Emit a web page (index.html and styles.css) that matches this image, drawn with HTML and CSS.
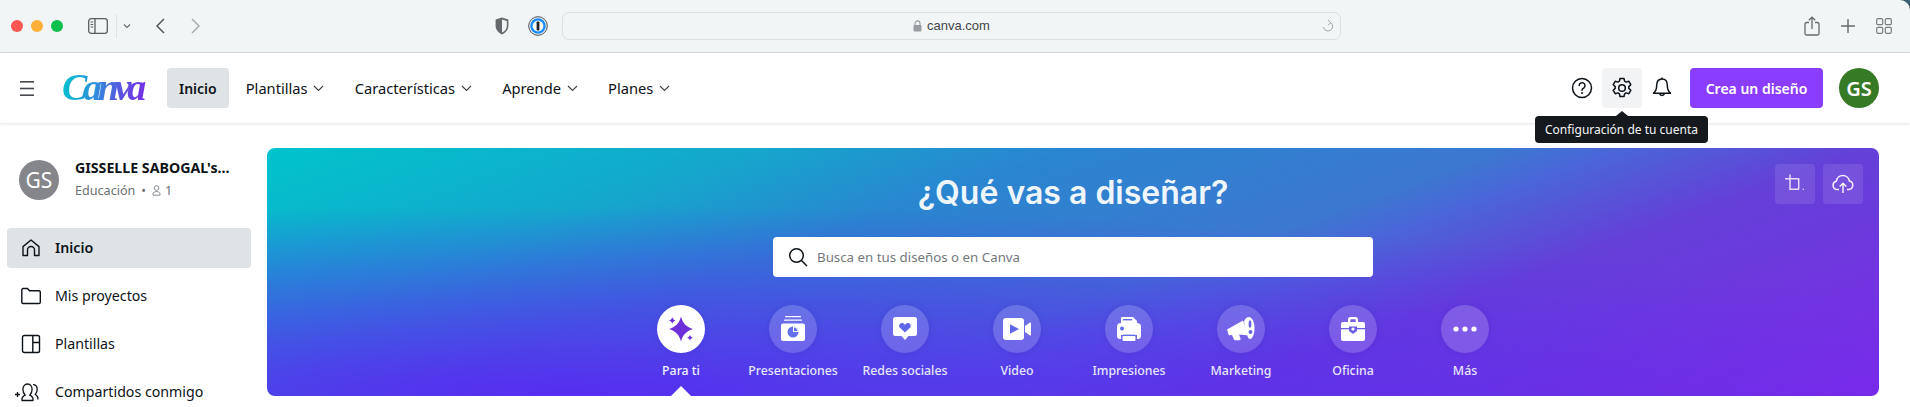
FILE: index.html
```html
<!DOCTYPE html>
<html lang="es">
<head>
<meta charset="utf-8">
<title>Canva</title>
<link rel="stylesheet" href="styles.css">
</head>
<body>
<div class="window">
  <header class="toolbar">
    <div class="lights"><span class="light red"></span><span class="light amber"></span><span class="light green"></span></div>
    <svg class="tb-sidebar" width="20" height="16" viewBox="0 0 20 16" fill="none" stroke="#5a5d60" stroke-width="1.3"><rect x=".7" y=".7" width="18.6" height="14.6" rx="2.5"/><path d="M7 1v14"/><path d="M2.600 4h2.600M2.600 6.500h2.600M2.600 9h2.600" stroke-width="1"/></svg>
    <span class="tb-sep"></span>
    <svg class="tb-drop" width="8" height="6" viewBox="0 0 8 6" fill="none" stroke="#6b6e71" stroke-width="1.2"><path d="M1 1.500l3 3 3-3"/></svg>
    <svg class="tb-back" width="10" height="16" viewBox="0 0 10 16" fill="none" stroke="#55585b" stroke-width="1.500"><path d="M9 1L2 8l7 7"/></svg>
    <svg class="tb-next" width="10" height="16" viewBox="0 0 10 16" fill="none" stroke="#a9acae" stroke-width="1.500"><path d="M1 1l7 7-7 7"/></svg>
    <svg class="tb-shield" width="14" height="18" viewBox="0 0 14 18"><path d="M7 .6l6.400 2v6.200c0 4-2.800 7-6.400 8.600C3.400 15.800.6 12.800.6 8.800V2.600z" fill="#66696c"/><path d="M7 2.400l4.800 1.500v5c0 3-2.100 5.300-4.800 6.700z" fill="#f1f4f5"/></svg>
    <svg class="tb-onepass" width="20" height="20" viewBox="0 0 20 20"><circle cx="10" cy="10" r="9.300" fill="#f1f4f5" stroke="#4b4e52" stroke-width="1"/><circle cx="10" cy="10" r="6.600" fill="#fff" stroke="#1a8cff" stroke-width="2.400"/><rect x="8.600" y="5.600" width="2.800" height="8.800" rx=".7" fill="#1d2126"/></svg>
    <div class="urlbar">
      <svg class="url-lock" width="9" height="12" viewBox="0 0 9 12"><path d="M2 5V3.400a2.500 2.500 0 015 0V5" fill="none" stroke="#9a9da0" stroke-width="1.100"/><rect x=".5" y="5" width="8" height="6.500" rx="1" fill="#9a9da0"/></svg>
      <span class="url-text">canva.com</span>
      <svg class="url-reload" width="12" height="14" viewBox="0 0 12 14" fill="none" stroke="#a2a5a7" stroke-width="1"><path d="M8.800 3.700A4.600 4.600 0 111.500 8"/><path d="M6 1l2.900 2.700L6.200 6"/></svg>
    </div>
    <div class="tb-right">
      <svg width="16" height="20" viewBox="0 0 16 20" fill="none" stroke="#66696c" stroke-width="1.300"><path d="M5 6.500H2.500A1.500 1.500 0 001 8v9.500A1.500 1.500 0 002.500 19h11a1.500 1.500 0 001.500-1.500V8a1.500 1.500 0 00-1.500-1.500H11"/><path d="M8 13V1.300M4.800 4.300L8 1.100l3.200 3.200"/></svg>
      <svg width="14" height="14" viewBox="0 0 14 14" fill="none" stroke="#66696c" stroke-width="1.400"><path d="M7 0v14M0 7h14"/></svg>
      <svg width="16" height="16" viewBox="0 0 16 16" fill="none" stroke="#7a7d80" stroke-width="1.200"><rect x=".7" y=".7" width="6" height="6" rx="1.200"/><rect x="9.300" y=".7" width="6" height="6" rx="1.200"/><rect x=".7" y="9.300" width="6" height="6" rx="1.200"/><rect x="9.300" y="9.300" width="6" height="6" rx="1.200"/></svg>
    </div>
  </header>

  <nav class="nav">
    <svg class="burger" width="14" height="15" viewBox="0 0 14 15" fill="#45484d"><rect y="0" width="14" height="1.600"/><rect y="6.700" width="14" height="1.600"/><rect y="13.400" width="14" height="1.600"/></svg>
    <span class="logo">Canva</span>
    <ul class="menu">
      <li class="menu-item active">Inicio</li>
      <li class="menu-item">Plantillas<svg class="chev" width="11" height="7" viewBox="0 0 11 7" fill="none" stroke="#3c4046" stroke-width="1.100"><path d="M1 1l4.500 4.500L10 1"/></svg></li>
      <li class="menu-item">Características<svg class="chev" width="11" height="7" viewBox="0 0 11 7" fill="none" stroke="#3c4046" stroke-width="1.100"><path d="M1 1l4.500 4.500L10 1"/></svg></li>
      <li class="menu-item">Aprende<svg class="chev" width="11" height="7" viewBox="0 0 11 7" fill="none" stroke="#3c4046" stroke-width="1.100"><path d="M1 1l4.500 4.500L10 1"/></svg></li>
      <li class="menu-item">Planes<svg class="chev" width="11" height="7" viewBox="0 0 11 7" fill="none" stroke="#3c4046" stroke-width="1.100"><path d="M1 1l4.500 4.500L10 1"/></svg></li>
    </ul>
    <div class="nav-right">
      <span class="nav-icon"><svg width="22" height="22" viewBox="0 0 22 22" fill="none" stroke="#0e1318" stroke-width="1.500"><circle cx="11" cy="11" r="9.500"/><path d="M8.200 8.600a2.900 2.900 0 115 2c-.9.800-2.200 1.300-2.200 2.700" stroke-linecap="round"/><circle cx="11" cy="16" r=".7" fill="#0e1318" stroke-width=".6"/></svg></span>
      <span class="nav-icon hover"><svg width="22" height="22" viewBox="0 0 22 22" fill="none" stroke="#0e1318" stroke-width="1.500" stroke-linejoin="round"><path d="M9 1.500h4l.6 2.700 1.500.9 2.700-.8 2 3.400-2 1.900v1.800l2 1.900-2 3.400-2.700-.8-1.500.9-.6 2.700H9l-.6-2.700-1.500-.9-2.700.8-2-3.400 2-1.900V9.600l-2-1.900 2-3.400 2.700.8 1.500-.9z"/><circle cx="11" cy="11" r="3.300"/></svg></span>
      <span class="nav-icon"><svg width="20" height="22" viewBox="0 0 20 22" fill="none" stroke="#0e1318" stroke-width="1.500" stroke-linejoin="round"><path d="M10 2c3.600 0 5.300 2.900 5.300 6.200 0 4 .8 6 3.200 8H1.500c2.400-2 3.200-4 3.200-8C4.700 4.900 6.400 2 10 2z"/><path d="M10 .6V2M7.500 16.500a2.600 2.600 0 005 0"/></svg></span>
      <span class="cta">Crea un diseño</span>
      <span class="user-avatar">GS</span>
    </div>
    <div class="tooltip">Configuración de tu cuenta</div>
  </nav>

  <div class="main">
    <aside class="sidebar">
      <div class="team">
        <span class="team-avatar">GS</span>
        <div class="team-info">
          <div class="team-name">GISSELLE SABOGAL's...</div>
          <div class="team-meta">Educación <span class="dot">•</span> <svg width="9" height="11" viewBox="0 0 9 11" fill="none" stroke="#6b7177" stroke-width=".8"><circle cx="4.500" cy="3" r="2.300"/><path d="M1 10.200c-.6-2 1-3.700 3.500-3.700S8.600 8.200 8 10.200z"/></svg> 1</div>
        </div>
      </div>
      <ul class="side-list">
        <li class="side-item active"><svg width="20" height="20" viewBox="0 0 20 20" fill="none" stroke="#0e1318" stroke-width="1.400" stroke-linejoin="round"><path d="M2 17.500V8.600L10 2l8 6.600v8.900h-4.500V12a3.500 3.500 0 00-7 0v5.500z"/></svg>Inicio</li>
        <li class="side-item"><svg width="20" height="20" viewBox="0 0 20 20" fill="none" stroke="#0e1318" stroke-width="1.400" stroke-linejoin="round"><path d="M.8 16.200V3.800A1.300 1.300 0 012.100 2.500h4.400l2 2.200H18a1.300 1.300 0 011.300 1.300v10.200a1.300 1.300 0 01-1.300 1.300H2.100a1.300 1.300 0 01-1.300-1.300z"/></svg>Mis proyectos</li>
        <li class="side-item"><svg width="20" height="20" viewBox="0 0 20 20" fill="none" stroke="#0e1318" stroke-width="1.400" stroke-linejoin="round"><rect x="1.500" y="1.500" width="17" height="17" rx="1.800"/><path d="M11.800 1.500v17M11.800 8.500h6.700"/></svg>Plantillas</li>
        <li class="side-item"><svg class="side-share" width="26" height="20" viewBox="0 0 26 20" fill="none" stroke="#0e1318" stroke-width="1.300" stroke-linejoin="round"><path d="M0 12.500h5M2.500 10v5"/><path d="M7 18.500c-.4-2.500.4-4 3.300-5.300-1.700-1.700-2.400-3.300-2.400-5.700 0-3 1.700-5.500 4.600-5.500s4.600 2.500 4.600 5.500c0 2.400-.7 4-2.400 5.700 2.900 1.300 3.700 2.800 3.300 5.300z"/><path d="M18 2.600c2.800 0 4.200 2.200 4.200 4.900 0 2-.6 3.500-2 5 2.200 1.100 3 2.600 2.700 5"/></svg>Compartidos conmigo</li>
      </ul>
    </aside>

    <section class="hero">
      <div class="hero-actions">
        <span class="hero-btn"><svg width="20" height="20" viewBox="0 0 20 20" fill="none" stroke="#e6dcf8" stroke-width="1.500"><path d="M0 4.700h13.700v10.500M5 .5v14.700h9"/><circle cx="18.300" cy="15.200" r=".8" fill="#e6dcf8" stroke="none"/></svg></span>
        <span class="hero-btn"><svg width="22" height="20" viewBox="0 0 22 20" fill="none" stroke="#f3eefc" stroke-width="1.500" stroke-linejoin="round"><path d="M7 15.500H5.200a4.200 4.200 0 01-.8-8.300 6.500 6.500 0 0112.900-.2 4.300 4.300 0 01-.5 8.500H15"/><path d="M11 19V9.500M7.700 12.500L11 9.300l3.300 3.200"/></svg></span>
      </div>
      <h1 class="hero-title">¿Qué vas a diseñar?</h1>
      <div class="search">
        <svg width="20" height="20" viewBox="0 0 20 20" fill="none" stroke="#0e1318" stroke-width="1.500"><circle cx="8.500" cy="8.500" r="6.800"/><path d="M13.500 13.500l5.500 5.500"/></svg>
        <span class="search-text">Busca en tus diseños o en Canva</span>
      </div>
      <ul class="cats">
        <li class="cat selected">
          <span class="cat-circle"><svg width="26" height="26" viewBox="0 0 26 26" fill="#6d2fd8"><path d="M13 .5C14.500 7 19 11.500 25 13c-6 1.500-10.500 6-12 12.500C11.500 19 7 14.500 1 13 7 11.500 11.500 7 13 .5z"/><path d="M4.300 1c.4 2 1.400 3 3.400 3.500-2 .5-3 1.500-3.400 3.500C3.900 6 2.900 5 .9 4.500 2.900 4 3.900 3 4.300 1zM22 18.500c.3 1.800 1.200 2.800 3 3.200-1.800.4-2.700 1.400-3 3.200-.3-1.800-1.200-2.800-3-3.200 1.800-.4 2.700-1.400 3-3.200z"/></svg></span>
          <span class="cat-label">Para ti</span>
        </li>
        <li class="cat">
          <span class="cat-circle"><svg width="26" height="26" viewBox="0 0 26 26" fill="#fff"><rect x="5" y="0" width="16" height="1.300" rx=".6"/><rect x="4" y="3.500" width="18" height="1.300" rx=".6"/><path d="M3 7.500h20a2 2 0 012 2V23a2 2 0 01-2 2H3a2 2 0 01-2-2V9.500a2 2 0 012-2z"/><circle cx="13" cy="16" r="5.500" fill="#6470ee"/><path d="M13 16v-5.500a5.500 5.500 0 015.500 5.500z" fill="#fff"/><path d="M14 15v-3.400a4 4 0 013.400 3.400z" fill="#6470ee"/></svg></span>
          <span class="cat-label">Presentaciones</span>
        </li>
        <li class="cat">
          <span class="cat-circle"><svg width="26" height="26" viewBox="0 0 26 26" fill="#fff"><path d="M3.500 1h19A2.500 2.500 0 0125 3.500v14a2.500 2.500 0 01-2.500 2.500h-6L13 24l-3.500-4h-6A2.500 2.500 0 011 17.500v-14A2.500 2.500 0 013.500 1z"/><path d="M13 16.500l-5-4.700c-2.200-2.400.4-6.200 3.300-4.500.7.400 1.300 1 1.700 1.700.4-.7 1-1.300 1.700-1.700 2.900-1.700 5.500 2.100 3.300 4.500z" fill="#6068ea"/></svg></span>
          <span class="cat-label">Redes sociales</span>
        </li>
        <li class="cat">
          <span class="cat-circle"><svg width="28" height="24" viewBox="0 0 28 24" fill="#fff"><path d="M3 1h15a3 3 0 013 3v16a3 3 0 01-3 3H3a3 3 0 01-3-3V4a3 3 0 013-3z"/><path d="M22 9l5-3.500c.5-.3 1 0 1 .6v11.800c0 .6-.5.900-1 .6L22 15z"/><path d="M7 7.300l9 4.700-9 4.700z" fill="#5f66e8"/></svg></span>
          <span class="cat-label">Video</span>
        </li>
        <li class="cat">
          <span class="cat-circle"><svg width="26" height="26" viewBox="0 0 26 26" fill="#fff"><path d="M6 1h11l4 4v3H5V2a1 1 0 011-1z"/><path d="M5 7h16a4 4 0 014 4v9a3 3 0 01-3 3h-1v-4H5v4H4a3 3 0 01-3-3v-9a4 4 0 014-4z"/><rect x="6.500" y="20" width="13" height="5" rx="1"/><circle cx="6" cy="12.500" r="2" fill="#5f70ea"/><rect x="7" y="3" width="9" height="1.400" fill="#5f70ea"/><rect x="7" y="18.600" width="12" height="1.400" fill="#5f70ea"/></svg></span>
          <span class="cat-label">Impresiones</span>
        </li>
        <li class="cat">
          <span class="cat-circle"><svg width="28" height="26" viewBox="0 0 28 26" fill="#fff"><path d="M0 13.500l16-9 6 15-10-1 1.500 3.700c.4 1-.3 2-1.400 2H8.500c-.9 0-1.500-.5-1.800-1.300L5 19l-3.200.3z"/><path d="M22 1c3 0 5.500 5 5.500 11s-2 11-4.500 11c-.8 0-1.500-.5-2-1.200L17 6c.5-3 2.500-5 5-5z"/><ellipse cx="23" cy="8" rx="1.400" ry="3.800" fill="#6a63e4"/><circle cx="23.500" cy="16" r="2" fill="#6a63e4"/></svg></span>
          <span class="cat-label">Marketing</span>
        </li>
        <li class="cat">
          <span class="cat-circle"><svg width="26" height="26" viewBox="0 0 26 26" fill="#fff"><path d="M8 7V3.500A2.500 2.500 0 0110.500 1h5A2.500 2.500 0 0118 3.500V7h-2.300V4a.8.800 0 00-.8-.8h-3.800a.8.800 0 00-.8.800v3z"/><path d="M3 6h20a2 2 0 012 2v15a2 2 0 01-2 2H3a2 2 0 01-2-2V8a2 2 0 012-2z"/><path d="M1 12.700h8M17 12.700h8" stroke="#6a5fe4" stroke-width="1.200" fill="none"/><path d="M9 10.500h8v4.500L13 18l-4-3z" fill="#6a5fe4"/><circle cx="13" cy="13" r="1.600"/></svg></span>
          <span class="cat-label">Oficina</span>
        </li>
        <li class="cat">
          <span class="cat-circle"><svg width="24" height="6" viewBox="0 0 24 6" fill="#fff"><circle cx="3" cy="3" r="2.600"/><circle cx="12" cy="3" r="2.600"/><circle cx="21" cy="3" r="2.600"/></svg></span>
          <span class="cat-label">Más</span>
        </li>
      </ul>
    </section>
  </div>
</div>
</body>
</html>
```

FILE: styles.css
```css
* { box-sizing: border-box; }
html, body { margin: 0; padding: 0; background: #fff; }
body { font-family: "Noto Sans", "Open Sans", sans-serif; color: #0e1318; }
ul { list-style: none; margin: 0; padding: 0; }
svg { display: block; flex: none; }

.window { width: 1910px; height: 407px; overflow: hidden; background: #3a5f72; }

/* Browser toolbar */
.toolbar { height: 53px; display: flex; align-items: center; background: #f2f5f6; border-bottom: 1px solid #d6d8d9; border-radius: 0 10px 0 0; padding: 0 0 1px 11px; }
.lights { display: flex; gap: 8px; }
.light { width: 12px; height: 12px; border-radius: 50%; }
.red { background: #fc5753; }
.amber { background: #fdaf3a; }
.green { background: #0cc04c; }
.tb-sidebar { margin-left: 25px; }
.tb-sep { width: 1px; height: 24px; background: #dfe2e3; margin-left: 8px; }
.tb-drop { margin-left: 6px; }
.tb-back { margin-left: 24px; }
.tb-next { margin-left: 26px; }
.tb-shield { margin-left: 294px; }
.tb-onepass { margin-left: 19px; }
.urlbar { width: 779px; height: 28px; margin-left: 14px; border: 1px solid #dcdfe0; border-radius: 7px; display: flex; align-items: center; justify-content: center; gap: 5px; position: relative; }
.url-text { font-family: "Liberation Sans", sans-serif; font-size: 13px; color: #43464a; }
.url-reload { position: absolute; right: 6px; top: 6px; }
.tb-right { display: flex; align-items: center; gap: 21px; margin-left: 463px; }

/* Canva nav */
.nav { height: 70px; display: flex; align-items: center; padding: 0 31px 0 20px; position: relative; background: #fff; box-shadow: 0 1px 3px rgba(20, 30, 50, .12); }
.logo { margin-left: 28px; width: 85px; padding-bottom: 3px; font-family: "Liberation Serif", serif; font-style: italic; font-weight: 700; font-size: 38px; letter-spacing: -4.3px; line-height: 1; background: linear-gradient(100deg, #00c4cc, #2f8fdc 40%, #5a50e0 70%, #7d2ae8); -webkit-background-clip: text; background-clip: text; color: transparent; }
.menu { display: flex; align-items: center; margin-left: 20px; font-size: 14.7px; }
.menu-item { height: 40px; display: flex; align-items: center; gap: 5.5px; padding: 0 12px; margin-right: 6.500px; color: #0e1318; border-radius: 4px; white-space: nowrap; }
.menu-item.active { background: #dfe3e6; font-weight: 600; margin-right: 5px; font-size: 14px; }
.nav-right { margin-left: auto; display: flex; align-items: center; }
.nav-icon { width: 40px; height: 40px; display: flex; align-items: center; justify-content: center; border-radius: 4px; }
.nav-icon.hover { background: #f1f3f5; }
.cta { width: 133px; height: 40px; margin-left: 8px; display: flex; align-items: center; justify-content: center; background: #8b3dff; color: #fff; font-weight: 600; font-size: 14px; border-radius: 4px; }
.user-avatar { width: 40px; height: 40px; margin-left: 16px; border-radius: 50%; background: #367a26; color: #fff; display: flex; align-items: center; justify-content: center; font-weight: 600; font-size: 20px; }
.tooltip { position: absolute; left: 1535px; top: 63px; width: 173px; height: 27px; display: flex; align-items: center; justify-content: center; background: #15181d; color: #f5f6f7; font-size: 12px; border-radius: 4px; white-space: nowrap; z-index: 2; }
.tooltip::before { content: ""; position: absolute; left: 81px; top: -5px; width: 0; height: 0; border-left: 6px solid transparent; border-right: 6px solid transparent; border-bottom: 5px solid #15181d; }

/* Main */
.main { display: flex; background: #fff; height: 284px; }
.sidebar { width: 267px; flex: none; padding: 37px 16px 0 7px; }
.team { display: flex; align-items: center; gap: 16px; padding-left: 12px; height: 40px; }
.team-avatar { width: 40px; height: 40px; border-radius: 50%; background: #85868a; color: #fff; display: flex; align-items: center; justify-content: center; font-size: 21px; flex: none; }
.team-info { min-width: 0; margin-top: -2px; }
.team-name { font-size: 14.2px; font-weight: 700; line-height: 20px; white-space: nowrap; }
.team-meta { display: flex; align-items: center; gap: 4px; font-size: 12.6px; line-height: 20px; color: #6b7177; margin-top: 3px; }
.dot { margin: 0 2px; }
.side-list { margin-top: 28px; display: flex; flex-direction: column; gap: 8px; }
.side-item { height: 40px; display: flex; align-items: center; gap: 14px; padding: 0 0 1px 14px; font-size: 14.2px; border-radius: 4px; }
.side-item.active { background: #dfe3e6; font-weight: 600; }
.side-share { margin-left: -6px; }

/* Hero */
.hero { width: 1612px; height: 248px; margin-top: 25px; flex: none; border-radius: 8px; position: relative; overflow: hidden; display: flex; flex-direction: column; align-items: center; padding-top: 23px; background: radial-gradient(ellipse 1500px 190px at 300px 100%, rgba(90, 40, 242, .95), rgba(90, 40, 242, .5) 50%, rgba(90, 40, 242, 0)), linear-gradient(160deg, #00c4cc 0%, #14a8cc 21%, #2a85d0 35%, #3c78d0 54%, #4a66d8 59%, #6440d8 70%, #7d2ae8 100%); }
.hero-title { margin: 0; font-family: Inter, sans-serif; font-size: 32px; font-weight: 600; line-height: 44px; color: #eef6fb; }
.hero-actions { position: absolute; right: 16px; top: 16px; display: flex; gap: 8px; }
.hero-btn { width: 40px; height: 40px; border-radius: 4px; background: rgba(255, 255, 255, .1); display: flex; align-items: center; justify-content: center; }
.search { width: 600px; height: 40px; margin-top: 22px; background: #fff; border-radius: 4px; display: flex; align-items: center; gap: 9px; padding-left: 15px; }
.search-text { font-size: 13.3px; color: #74787c; }
.cats { display: flex; margin-top: 28px; }
.cat { width: 112px; display: flex; flex-direction: column; align-items: center; position: relative; height: 91px; }
.cat-circle { width: 48px; height: 48px; border-radius: 50%; background: rgba(255, 255, 255, .18); display: flex; align-items: center; justify-content: center; box-shadow: 0 0 6px rgba(30, 20, 120, .12); }
.cat-label { margin-top: 8px; font-size: 12.3px; line-height: 20px; font-weight: 500; color: #e6e6fb; white-space: nowrap; }
.cat.selected .cat-circle { background: #fff; }
.cat.selected .cat-label { color: #f2f0ff; }
.cat.selected::after { content: ""; position: absolute; left: 46px; bottom: 0; width: 0; height: 0; border-left: 10px solid transparent; border-right: 10px solid transparent; border-bottom: 10px solid #fff; }
```
